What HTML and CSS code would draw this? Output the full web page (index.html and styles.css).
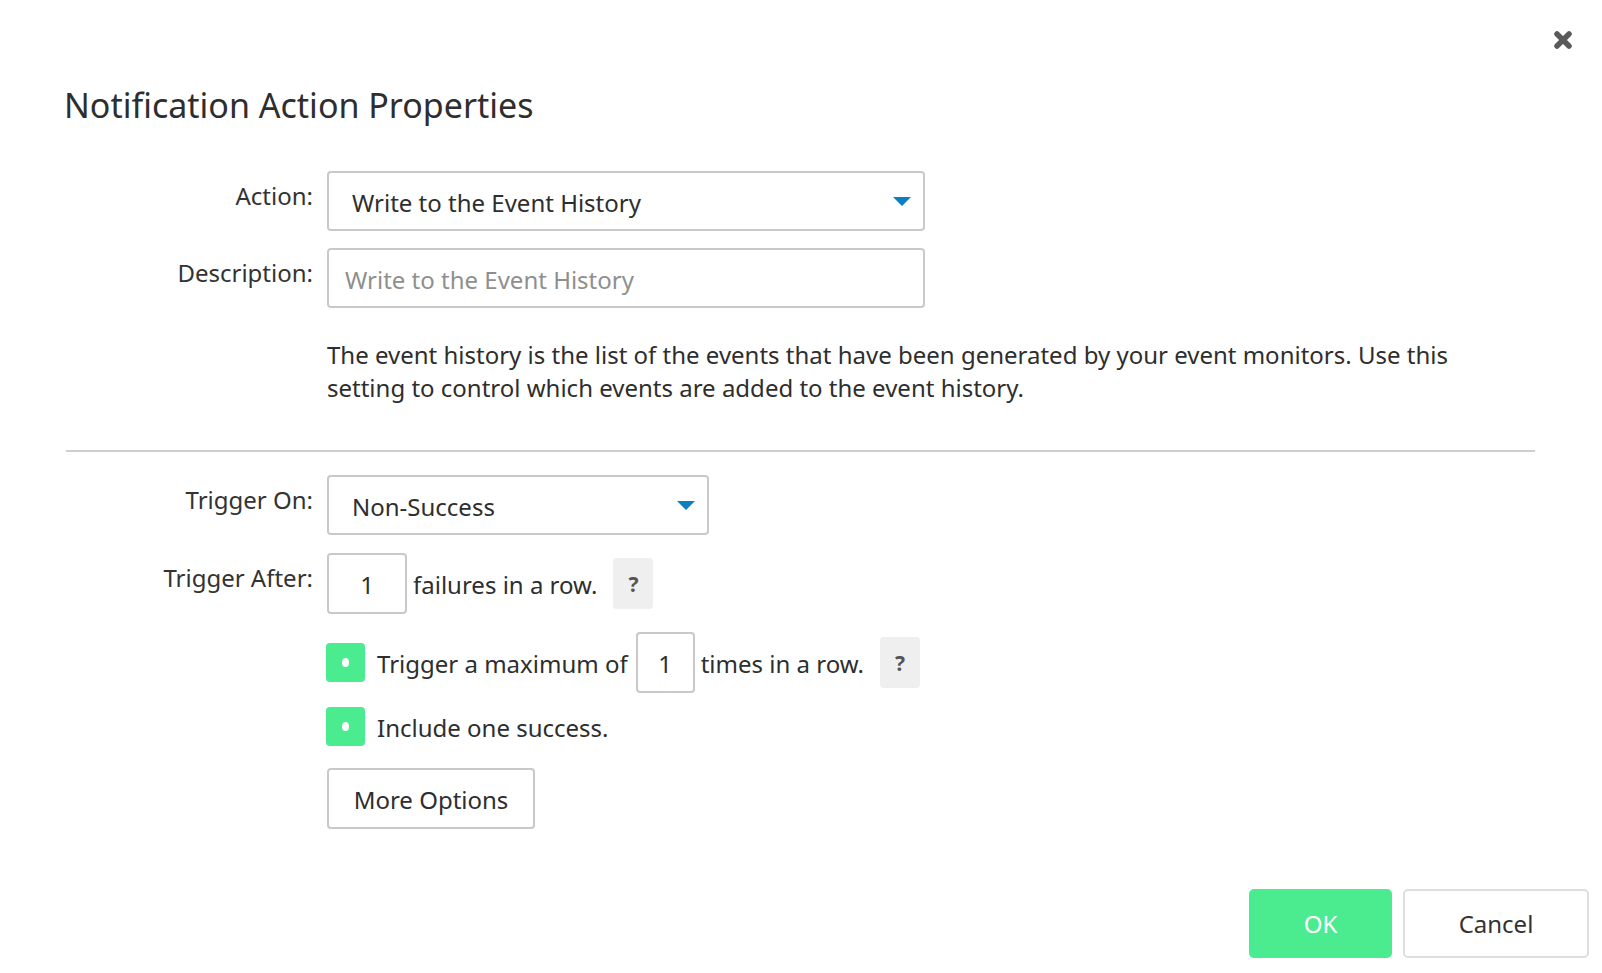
FILE: index.html
```html
<!DOCTYPE html>
<html lang="en">
<head>
<meta charset="utf-8">
<title>Notification Action Properties</title>
<link rel="stylesheet" href="styles.css">
</head>
<body>
<div class="dialog">
  <button class="close" aria-label="Close">
    <svg width="20" height="20" viewBox="0 0 20 20"><path d="M4 4 L16 16 M16 4 L4 16" stroke="#5a5a5a" stroke-width="5.5" stroke-linecap="round"/></svg>
  </button>
  <h1 class="title">Notification Action Properties</h1>

  <div class="row row-action">
    <label class="label">Action:</label>
    <div class="select select-wide">
      <span class="select-text">Write to the Event History</span>
      <span class="caret"></span>
    </div>
  </div>

  <div class="row row-desc">
    <label class="label">Description:</label>
    <div class="input input-wide"><span class="placeholder">Write to the Event History</span></div>
  </div>

  <div class="row row-help">
    <div class="label"></div>
    <p class="help">The event history is the list of the events that have been generated by your event monitors. Use this setting to control which events are added to the event history.</p>
  </div>

  <hr class="divider">

  <div class="row row-trigger-on">
    <label class="label">Trigger On:</label>
    <div class="select select-mid">
      <span class="select-text">Non-Success</span>
      <span class="caret"></span>
    </div>
  </div>

  <div class="row row-trigger-after">
    <label class="label">Trigger After:</label>
    <div class="inline">
      <div class="num num-a">1</div>
      <span class="txt">failures in a row.</span>
      <span class="help-btn help-a">?</span>
    </div>
  </div>

  <div class="row row-max">
    <div class="label"></div>
    <div class="inline">
      <span class="check"><span class="dot"></span></span>
      <span class="txt txt-check">Trigger a maximum of</span>
      <div class="num num-b">1</div>
      <span class="txt">times in a row.</span>
      <span class="help-btn help-b">?</span>
    </div>
  </div>

  <div class="row row-include">
    <div class="label"></div>
    <div class="inline">
      <span class="check"><span class="dot"></span></span>
      <span class="txt txt-check">Include one success.</span>
    </div>
  </div>

  <div class="row row-more">
    <div class="label"></div>
    <button class="btn-more">More Options</button>
  </div>

  <div class="footer">
    <button class="btn-ok">OK</button>
    <button class="btn-cancel">Cancel</button>
  </div>
</div>
</body>
</html>
```

FILE: styles.css
```css
* { box-sizing: border-box; }
html, body { margin: 0; padding: 0; background: #fff; }
body {
  font-family: "Noto Sans", "Open Sans", "DejaVu Sans", sans-serif;
  color: #333;
  font-size: 24px;
  width: 1602px;
  height: 973px;
  overflow: hidden;
}
.dialog {
  position: relative;
  display: flex;
  flex-direction: column;
  padding-top: 81px;
}
.close {
  position: absolute;
  top: 30px;
  left: 1553px;
  width: 20px;
  height: 20px;
  padding: 0;
  border: 0;
  background: none;
  line-height: 0;
}
.title {
  margin: 0 0 0 64px;
  font-size: 34px;
  font-weight: 400;
  color: #2e2e2e;
  line-height: 48px;
  height: 48px;
}
.row {
  display: grid;
  grid-template-columns: 313px auto;
  column-gap: 14px;
  align-items: start;
}
.label {
  text-align: right;
  padding-top: 9px;
  line-height: 32px;
  color: #333;
}
.row-action { margin-top: 42px; }
.row-desc { margin-top: 17px; }
.row-help { margin-top: 30px; }
.select, .input {
  height: 60px;
  border: 2px solid #c9c9c9;
  border-radius: 4px;
  display: flex;
  align-items: center;
  background: #fff;
}
.select-wide, .input-wide { width: 598px; }
.select-mid { width: 382px; }
.select-text { padding-left: 23px; flex: 1; color: #2e2e2e; padding-top: 2px; }
.placeholder { padding-left: 16px; color: #8f8f8f; padding-top: 2px; }
.caret {
  width: 0; height: 0;
  border-left: 9px solid transparent;
  border-right: 9px solid transparent;
  border-top: 9px solid #0b7fc0;
  margin-right: 12px;
}
.help {
  margin: 0;
  width: 1165px;
  line-height: 33px;
  color: #2e2e2e;
}
.divider {
  margin: 46px 0 0 66px;
  width: 1469px;
  border: 0;
  border-top: 2px solid #cfcfcf;
  height: 0;
}
.row-trigger-on { margin-top: 23px; }
.row-trigger-after { margin-top: 18px; }
.row-max { margin-top: 18px; }
.row-include { margin-top: 14px; }
.row-more { margin-top: 22px; }
.inline {
  display: flex;
  align-items: center;
}
.num {
  height: 61px;
  border: 2px solid #c9c9c9;
  border-radius: 4px;
  display: flex;
  align-items: center;
  justify-content: center;
  color: #2e2e2e;
  padding-top: 2px;
}
.num-a { width: 80px; }
.num-b { width: 59px; margin: 0 6px 0 8px; }
.txt { color: #2e2e2e; padding-top: 2px; }
.num-a + .txt { margin-left: 6px; }
.help-btn {
  width: 40px;
  height: 51px;
  background: #efefef;
  border-radius: 4px;
  display: flex;
  align-items: center;
  justify-content: center;
  font-weight: 700;
  font-size: 21px;
  color: #555;
}
.help-a { margin-left: 16px; }
.help-b { margin-left: 16px; }
.check {
  width: 39px;
  height: 39px;
  background: #4aec8f;
  border-radius: 4px;
  display: flex;
  align-items: center;
  justify-content: center;
  margin-left: -1px;
}
.dot {
  width: 7px;
  height: 9px;
  background: #fff;
  border-radius: 50%;
}
.txt-check { margin-left: 12px; }
.btn-more {
  width: 208px;
  height: 61px;
  border: 2px solid #c9c9c9;
  border-radius: 4px;
  background: #fff;
  font: inherit;
  color: #2e2e2e;
  padding: 2px 0 0;
}
.footer {
  display: flex;
  gap: 11px;
  margin: 60px 0 0 1249px;
}
.btn-ok {
  width: 143px;
  height: 69px;
  border: 0;
  border-radius: 5px;
  background: #4aec8f;
  color: #fff;
  font: inherit;
  font-size: 24px;
}
.btn-cancel {
  width: 186px;
  height: 69px;
  border: 2px solid #dedede;
  border-radius: 5px;
  background: #fff;
  color: #333;
  font: inherit;
  font-size: 24px;
}
```
